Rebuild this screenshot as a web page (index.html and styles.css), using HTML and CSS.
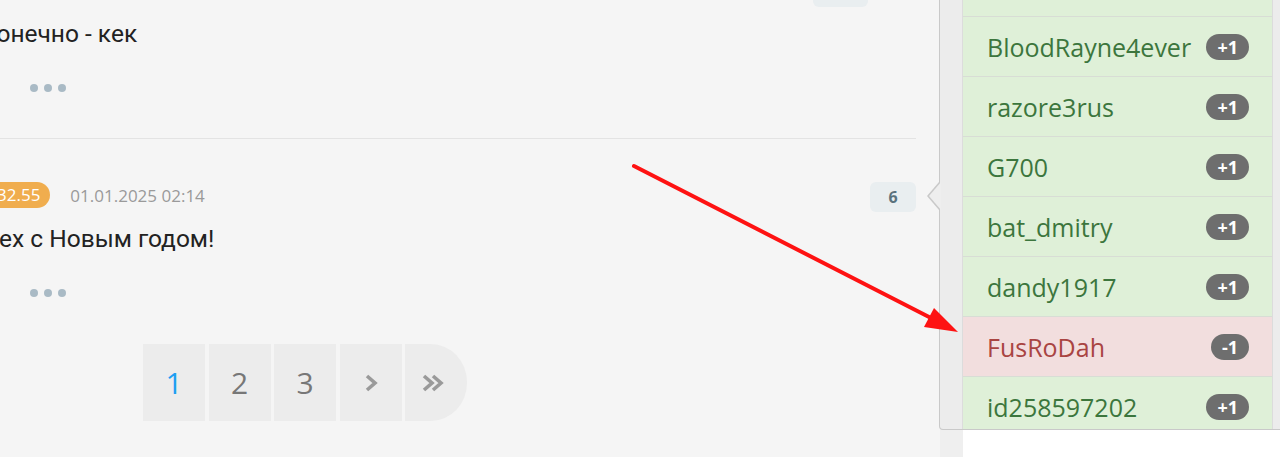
FILE: index.html
```html
<!DOCTYPE html>
<html lang="ru">
<head>
<meta charset="utf-8">
<title>Комментарии</title>
<link rel="stylesheet" href="styles.css">
</head>
<body>
<div class="page">
  <main class="main">
    <article class="comment comment-first">
      <div class="comment-head head-first">
        <span class="count count-wide"></span>
      </div>
      <p class="comment-text text-first">Конечно - кек</p>
      <div class="dots"><i></i><i></i><i></i></div>
    </article>
    <article class="comment comment-second">
      <div class="comment-head head-second">
        <span class="score">32.55</span>
        <span class="date">01.01.2025 02:14</span>
        <span class="count">6</span>
      </div>
      <p class="comment-text text-second">Всех с Новым годом!</p>
      <div class="dots"><i></i><i></i><i></i></div>
    </article>
    <nav class="pager">
      <a class="page-item active">1</a>
      <a class="page-item">2</a>
      <a class="page-item">3</a>
      <a class="page-item">
        <svg width="14" height="18" viewBox="0 0 14 18"><polyline points="3,2 11,9 3,16" fill="none" stroke="#9a9a9a" stroke-width="3.6"/></svg>
      </a>
      <a class="page-item last">
        <svg width="24" height="18" viewBox="0 0 24 18"><polyline points="3,2 11,9 3,16" fill="none" stroke="#9a9a9a" stroke-width="3.6"/><polyline points="12,2 20,9 12,16" fill="none" stroke="#9a9a9a" stroke-width="3.6"/></svg>
      </a>
    </nav>
  </main>
  <aside class="sidebar">
    <div class="gutter"></div>
    <div class="panel"></div>
  </aside>
</div>

<div class="popover">
  <ul class="votes">
    <li class="vote"><span class="name">Mamont</span><span class="delta">+1</span></li>
    <li class="vote"><span class="name">BloodRayne4ever</span><span class="delta">+1</span></li>
    <li class="vote"><span class="name">razore3rus</span><span class="delta">+1</span></li>
    <li class="vote"><span class="name">G700</span><span class="delta">+1</span></li>
    <li class="vote"><span class="name">bat_dmitry</span><span class="delta">+1</span></li>
    <li class="vote"><span class="name">dandy1917</span><span class="delta">+1</span></li>
    <li class="vote negative"><span class="name">FusRoDah</span><span class="delta">-1</span></li>
    <li class="vote"><span class="name">id258597202</span><span class="delta">+1</span></li>
  </ul>
</div>

<svg class="annotation" width="1280" height="457" viewBox="0 0 1280 457">
  <line x1="634" y1="166" x2="931" y2="318" stroke="#fe1212" stroke-width="4" stroke-linecap="round"/>
  <polygon points="958,332 924,327 934,308" fill="#fe1212"/>
</svg>
</body>
</html>
```

FILE: styles.css
```css
* {
  box-sizing: border-box;
}

html, body {
  margin: 0;
  padding: 0;
}

body {
  width: 1280px;
  height: 457px;
  overflow: hidden;
  position: relative;
  font-family: "Open Sans", "Liberation Sans", sans-serif;
  background: #f5f5f5;
}

.page {
  display: flex;
  height: 457px;
}

.main {
  width: 940px;
  flex: none;
  padding-right: 24px;
  background: #f5f5f5;
  overflow: hidden;
}

.sidebar {
  flex: 1;
  display: flex;
}

.gutter {
  width: 23px;
  background: #efefef;
}

.panel {
  flex: 1;
  background: #ffffff;
}

/* Comments */
.comment-first {
  margin-top: -23px;
  padding-bottom: 46px;
  border-bottom: 1px solid #e3e3e3;
}

.comment-second {
  padding-top: 43px;
}

.comment-head {
  display: flex;
  align-items: center;
  height: 30px;
}

.head-second {
  margin-left: -13px;
}

.score {
  height: 26px;
  line-height: 26px;
  padding: 0 10px;
  border-radius: 13px;
  background: #f0ad4e;
  color: #ffffff;
  font-size: 17px;
  margin-top: -4px;
}

.date {
  margin-left: 20px;
  color: #9a9a9a;
  font-size: 17px;
  margin-top: -4px;
}

.count {
  margin-left: auto;
  width: 46px;
  height: 30px;
  line-height: 30px;
  border-radius: 6px;
  background: #e9eef0;
  color: #5a727d;
  font-weight: 700;
  font-size: 16px;
  text-align: center;
}

.count-wide {
  width: 55px;
  margin-right: 48px;
}

.comment-text {
  margin: 12px 0 0;
  font-family: Roboto, "Liberation Sans", sans-serif;
  font-size: 24.5px;
  line-height: 30px;
  color: #222222;
  white-space: nowrap;
}

.text-first {
  margin-left: -19px;
}

.text-second {
  margin-left: -29px;
}

.dots {
  display: flex;
  gap: 6px;
  margin-top: 35px;
  padding-left: 30px;
  height: 8px;
}

.dots i {
  width: 8px;
  height: 8px;
  border-radius: 50%;
  background: #a9bac5;
}

/* Pager */
.pager {
  display: flex;
  gap: 3.5px;
  margin: 47px 0 0 143px;
}

.page-item {
  width: 62px;
  height: 77px;
  display: flex;
  align-items: center;
  justify-content: center;
  background: #ececec;
  color: #777777;
  font-size: 30px;
}

.page-item.active {
  color: #1e9ff2;
}

.page-item.last {
  border-radius: 0 36px 36px 0 / 0 38px 38px 0;
  padding-right: 6px;
}

/* Popover with voters */
.popover {
  position: absolute;
  left: 939px;
  top: -43px;
  width: 400px;
  padding: 0 22px;
  background: #ececec;
  border: 1px solid #c9c9c9;
  border-top: none;
  border-radius: 0 0 0 4px;
}

.popover::before,
.popover::after {
  content: "";
  position: absolute;
  top: 225px;
  width: 0;
  height: 0;
  border-top: 14px solid transparent;
  border-bottom: 14px solid transparent;
}

.popover::before {
  left: -13px;
  border-right: 12px solid #c9c9c9;
}

.popover::after {
  left: -11px;
  border-right: 12px solid #eeeeee;
}

.votes {
  list-style: none;
  margin: 0;
  padding: 0;
  width: 311px;
  height: 472px;
  overflow: hidden;
  border-left: 1px solid #dcdcdc;
  border-right: 1px solid #dcdcdc;
  background: #ffffff;
}

.vote {
  display: flex;
  align-items: center;
  justify-content: space-between;
  height: 60px;
  padding: 0 23px 0 24px;
  border-bottom: 1px solid #d8ddd5;
  background: #dff0d8;
  color: #3c763d;
  font-size: 25px;
  white-space: nowrap;
}

.vote.negative {
  background: #f2dede;
  color: #a94442;
}

.delta {
  height: 26px;
  line-height: 26px;
  padding: 0 11px;
  border-radius: 13px;
  background: #6e6e6e;
  color: #ffffff;
  font-weight: 700;
  font-size: 18px;
}

.annotation {
  position: absolute;
  left: 0;
  top: 0;
  pointer-events: none;
}
```
